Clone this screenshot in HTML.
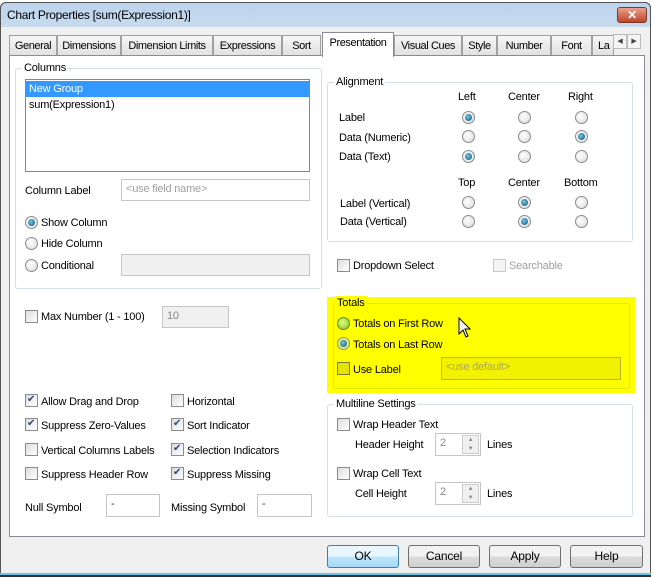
<!DOCTYPE html>
<html><head><style>
*{box-sizing:border-box;margin:0;padding:0}
body{width:654px;height:577px;background:#fff;position:relative;overflow:hidden;font-family:"Liberation Sans",sans-serif;font-size:11px;letter-spacing:-0.2px;color:#000;line-height:16px}
.a{position:absolute;white-space:nowrap}
.win{position:absolute;left:0;top:2px;width:651px;height:575px;background:#f0f0f0;border:1px solid #555;border-radius:6px 6px 0 0}
.title{position:absolute;left:0;top:2px;width:651px;height:25px;background:linear-gradient(#bcd3ec,#c8dbef);border-radius:6px 6px 0 0;border:1px solid #555;border-bottom:none}
.tab{position:absolute;top:35px;height:21px;border:1px solid #a0a0a0;border-bottom:none;background:linear-gradient(#f6f6f6,#e0e0e0);text-align:center;line-height:20px;letter-spacing:-0.4px;overflow:hidden}
.panel{position:absolute;left:9px;top:55px;width:636px;height:482px;background:#fff;border:1px solid #898c95}
.grp{position:absolute;border:1px solid #d5dfe5;border-radius:3px}
.gl{position:absolute;background:#fff;padding:0 2px;top:-8px;left:6px;line-height:14px}
.inp{position:absolute;border:1px solid #c5c5c5;background:#fff;color:#a0a0a0;padding:2px 4px;line-height:15px}
.dis{background:#f0f0f0}
.rb{position:absolute;width:13px;height:13px;border-radius:50%;border:1px solid #8c8c8c;background:radial-gradient(circle at 40% 40%,#fff,#d8d8d8)}
.rb.on::after{content:"";position:absolute;left:2px;top:2px;width:7px;height:7px;border-radius:50%;background:radial-gradient(circle at 40% 40%,#6fc6e8,#0d4f72)}
.cb{position:absolute;width:13px;height:13px;border:1px solid #8c8c8c;background:linear-gradient(135deg,#ddd,#fff)}
.cb.on::after{content:"✔";position:absolute;left:1px;top:-2px;font-size:10px;line-height:14px;color:#2a4a7a}
.btn{position:absolute;top:545px;height:23px;width:72px;border:1px solid #707070;border-radius:3px;background:linear-gradient(#f2f2f2 50%,#dcdcdc 50%,#cfcfcf);text-align:center;line-height:21px;font-size:12px}
.sp{position:absolute;width:17px;height:19px;border:1px solid #ccc;background:#f0f0f0;font-size:6px;color:#888;text-align:center;line-height:9px}
</style></head><body>
<div class="win"></div>
<div class="title"></div>
<div class="a" style="left:7px;top:7px;font-size:12px;letter-spacing:-0.3px">Chart Properties [sum(Expression1)]</div>
<div class="a" style="left:617px;top:7px;width:30px;height:16px;border:1px solid #7a3a2a;border-radius:3px;background:linear-gradient(#e8a08a,#c0432a);color:#fff;font-weight:bold;text-align:center;line-height:14px;font-size:12px">✕</div>

<div class="tab" style="left:9px;width:48px">General</div>
<div class="tab" style="left:57px;width:64px">Dimensions</div>
<div class="tab" style="left:121px;width:92px">Dimension Limits</div>
<div class="tab" style="left:213px;width:69px">Expressions</div>
<div class="tab" style="left:282px;width:39px">Sort</div>
<div class="tab" style="left:394px;width:68px">Visual Cues</div>
<div class="tab" style="left:462px;width:35px">Style</div>
<div class="tab" style="left:497px;width:54px">Number</div>
<div class="tab" style="left:551px;width:41px">Font</div>
<div class="tab" style="left:592px;width:22px;text-align:left;padding-left:5px">La</div>
<div class="a" style="left:613px;top:34px;width:14px;height:15px;border:1px solid #bbb;background:#f4f4f4;font-size:7px;text-align:center;line-height:13px;color:#444">◀</div>
<div class="a" style="left:627px;top:34px;width:14px;height:15px;border:1px solid #bbb;background:#f4f4f4;font-size:7px;text-align:center;line-height:13px;color:#444">▶</div>
<div class="panel"></div>
<div class="tab" style="left:322px;top:32px;height:25px;width:72px;background:#fff;border-color:#898c95;line-height:21px;z-index:2">Presentation</div>

<!-- Columns -->
<div class="grp" style="left:15px;top:68px;width:307px;height:221px"><span class="gl">Columns</span></div>
<div class="a" style="left:25px;top:79px;width:285px;height:93px;border:1px solid #828790;background:#fff"></div>
<div class="a" style="left:26px;top:81px;width:283px;height:16px;background:#3399ff;color:#fff;padding-left:3px;line-height:16px">New Group</div>
<div class="a" style="left:29px;top:97px;line-height:16px">sum(Expression1)</div>
<div class="a" style="left:25px;top:183px">Column Label</div>
<div class="inp" style="left:121px;top:179px;width:189px;height:22px">&lt;use field name&gt;</div>
<div class="rb on" style="left:25px;top:216px"></div><div class="a" style="left:41px;top:215px">Show Column</div>
<div class="rb" style="left:25px;top:237px"></div><div class="a" style="left:41px;top:236px">Hide Column</div>
<div class="rb" style="left:25px;top:259px"></div><div class="a" style="left:41px;top:258px">Conditional</div>
<div class="inp dis" style="left:121px;top:254px;width:189px;height:22px"></div>

<!-- Alignment -->
<div class="grp" style="left:327px;top:82px;width:306px;height:160px"><span class="gl">Alignment</span></div>
<div class="a" style="left:458px;top:89px">Left</div>
<div class="a" style="left:508px;top:89px">Center</div>
<div class="a" style="left:568px;top:89px">Right</div>
<div class="a" style="left:339px;top:110px">Label</div>
<div class="a" style="left:339px;top:130px">Data (Numeric)</div>
<div class="a" style="left:339px;top:149px">Data (Text)</div>
<div class="a" style="left:458px;top:175px">Top</div>
<div class="a" style="left:508px;top:175px">Center</div>
<div class="a" style="left:564px;top:175px">Bottom</div>
<div class="a" style="left:340px;top:196px">Label (Vertical)</div>
<div class="a" style="left:340px;top:214px">Data (Vertical)</div>
<div class="rb on" style="left:462px;top:111px"></div><div class="rb" style="left:518px;top:111px"></div><div class="rb" style="left:575px;top:111px"></div>
<div class="rb" style="left:462px;top:130px"></div><div class="rb" style="left:518px;top:130px"></div><div class="rb on" style="left:575px;top:130px"></div>
<div class="rb on" style="left:462px;top:150px"></div><div class="rb" style="left:518px;top:150px"></div><div class="rb" style="left:575px;top:150px"></div>
<div class="rb" style="left:462px;top:196px"></div><div class="rb on" style="left:518px;top:196px"></div><div class="rb" style="left:575px;top:196px"></div>
<div class="rb" style="left:462px;top:215px"></div><div class="rb on" style="left:518px;top:215px"></div><div class="rb" style="left:575px;top:215px"></div>
<div class="cb" style="left:337px;top:259px"></div><div class="a" style="left:353px;top:258px">Dropdown Select</div>
<div class="cb" style="left:493px;top:259px;border-color:#c8c8c8;background:#f4f4f4"></div><div class="a" style="left:509px;top:258px;color:#a0a0a0">Searchable</div>

<!-- Max number -->
<div class="cb" style="left:25px;top:310px"></div><div class="a" style="left:41px;top:309px">Max Number (1 - 100)</div>
<div class="inp dis" style="left:162px;top:306px;width:67px;height:22px;color:#888">10</div>

<!-- Totals -->
<div class="a" style="left:327px;top:297px;width:308px;height:96px;background:#ffff00"></div>
<div class="grp" style="left:333px;top:303px;width:297px;height:86px;border-color:#e6e600"><span class="gl" style="background:#ffff00;left:1px">Totals</span></div>
<div class="rb" style="left:337px;top:317px;background:radial-gradient(circle at 40% 40%,#e0ff80,#80c020);border-color:#6a8a20"></div><div class="a" style="left:353px;top:316px">Totals on First Row</div>
<div class="rb on" style="left:337px;top:337px;background:#e6f060"></div><div class="a" style="left:353px;top:337px">Totals on Last Row</div>
<div class="cb" style="left:337px;top:362px;background:#e4e400;border-color:#7a7a30"></div><div class="a" style="left:353px;top:362px">Use Label</div>
<div class="inp" style="left:441px;top:357px;width:180px;height:23px;background:#f2f200;border-color:#b8b830;color:#a8a860">&lt;use default&gt;</div>
<svg class="a" style="left:458px;top:317px" width="14" height="22" viewBox="0 0 14 22"><path d="M1 1 L1 17 L5 13 L8 20 L10 19 L7 12 L12 12 Z" fill="#fff" stroke="#000" stroke-width="1"/></svg>

<!-- Multiline -->
<div class="grp" style="left:327px;top:404px;width:306px;height:113px"><span class="gl">Multiline Settings</span></div>
<div class="cb" style="left:337px;top:418px"></div><div class="a" style="left:353px;top:417px">Wrap Header Text</div>
<div class="a" style="left:355px;top:437px">Header Height</div>
<div class="inp" style="left:435px;top:433px;width:46px;height:23px;color:#888">2</div>
<div class="sp" style="left:462px;top:435px">▲<br>▼</div>
<div class="a" style="left:487px;top:437px">Lines</div>
<div class="cb" style="left:337px;top:467px"></div><div class="a" style="left:353px;top:466px">Wrap Cell Text</div>
<div class="a" style="left:355px;top:486px">Cell Height</div>
<div class="inp" style="left:435px;top:482px;width:46px;height:23px;color:#888">2</div>
<div class="sp" style="left:462px;top:484px">▲<br>▼</div>
<div class="a" style="left:487px;top:486px">Lines</div>

<!-- Left checkboxes -->
<div class="cb on" style="left:25px;top:394px"></div><div class="a" style="left:41px;top:394px">Allow Drag and Drop</div>
<div class="cb on" style="left:25px;top:418px"></div><div class="a" style="left:41px;top:418px">Suppress Zero-Values</div>
<div class="cb" style="left:25px;top:443px"></div><div class="a" style="left:41px;top:443px">Vertical Columns Labels</div>
<div class="cb" style="left:25px;top:467px"></div><div class="a" style="left:41px;top:467px">Suppress Header Row</div>
<div class="cb" style="left:171px;top:394px"></div><div class="a" style="left:187px;top:394px">Horizontal</div>
<div class="cb on" style="left:171px;top:418px"></div><div class="a" style="left:187px;top:418px">Sort Indicator</div>
<div class="cb on" style="left:171px;top:443px"></div><div class="a" style="left:187px;top:443px">Selection Indicators</div>
<div class="cb on" style="left:171px;top:467px"></div><div class="a" style="left:187px;top:467px">Suppress Missing</div>
<div class="a" style="left:25px;top:500px">Null Symbol</div>
<div class="inp" style="left:106px;top:494px;width:54px;height:23px;color:#333">-</div>
<div class="a" style="left:171px;top:500px">Missing Symbol</div>
<div class="inp" style="left:257px;top:494px;width:55px;height:23px;color:#333">-</div>

<!-- Buttons -->
<div class="btn" style="left:327px;border-color:#3c7fb1;background:linear-gradient(#eaf6fd 50%,#bee6fd 50%,#a7d9f5)">OK</div>
<div class="btn" style="left:408px">Cancel</div>
<div class="btn" style="left:489px">Apply</div>
<div class="btn" style="left:570px;width:73px">Help</div>
<div class="a" style="left:0;top:573px;width:651px;height:4px;background:#6cc4e8;border-bottom:2px solid #333"></div>
</body></html>
